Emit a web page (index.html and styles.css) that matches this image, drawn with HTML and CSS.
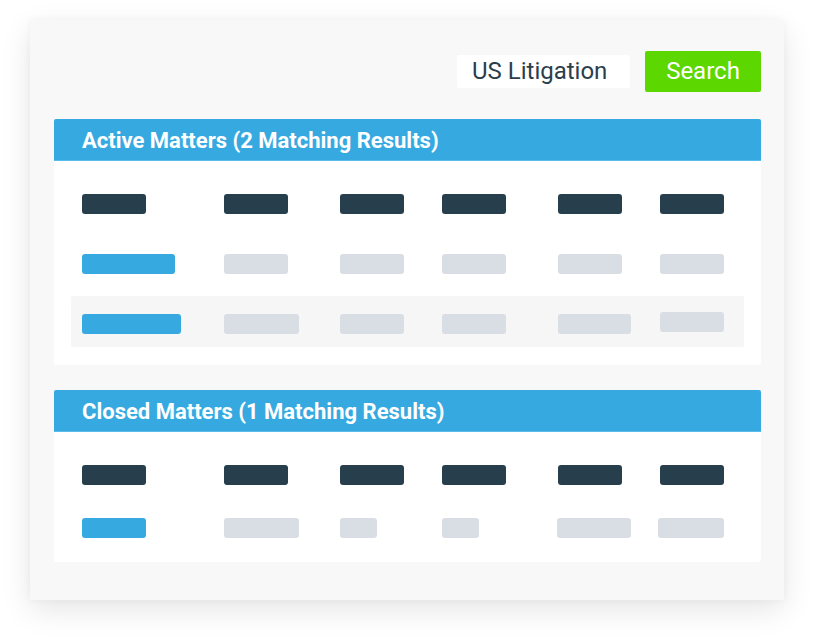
FILE: index.html
```html
<!DOCTYPE html>
<html>
<head>
<meta charset="utf-8">
<link rel="stylesheet" href="styles.css">
</head>
<body>
<div class="card">
  <div class="search">
    <div class="input">US Litigation</div>
    <div class="btn">Search</div>
  </div>

  <div class="panel">
    <div class="panel-head">Active Matters (2 Matching Results)</div>
    <div class="panel-body">
      <div class="row">
        <span class="bar dark w64"></span><span class="bar dark w64"></span><span class="bar dark w64"></span><span class="bar dark w64"></span><span class="bar dark w64"></span><span class="bar dark w64"></span>
      </div>
      <div class="row">
        <span class="bar blue w93"></span><span class="bar gray w64"></span><span class="bar gray w64"></span><span class="bar gray w64"></span><span class="bar gray w64"></span><span class="bar gray w64"></span>
      </div>
      <div class="row shaded">
        <span class="bar blue w99"></span><span class="bar gray w75"></span><span class="bar gray w64"></span><span class="bar gray w64"></span><span class="bar gray w73"></span><span class="bar gray w64 up"></span>
      </div>
    </div>
  </div>

  <div class="panel">
    <div class="panel-head">Closed Matters (1 Matching Results)</div>
    <div class="panel-body tight">
      <div class="row">
        <span class="bar dark w64"></span><span class="bar dark w64"></span><span class="bar dark w64"></span><span class="bar dark w64"></span><span class="bar dark w64"></span><span class="bar dark w64"></span>
      </div>
      <div class="row">
        <span class="bar blue w64"></span><span class="bar gray w75"></span><span class="bar gray w37"></span><span class="bar gray w37"></span><span class="bar gray w74 left1"></span><span class="bar gray w66 left2"></span>
      </div>
    </div>
  </div>
</div>
</body>
</html>
```

FILE: styles.css
```css
* { box-sizing: border-box; }
html, body { margin: 0; padding: 0; background: #ffffff; }
body {
  font-family: Roboto, "Liberation Sans", sans-serif;
  width: 815px;
  height: 641px;
  overflow: hidden;
}
.card {
  margin: 20px 0 0 30px;
  width: 754px;
  height: 580px;
  background: #f8f8f8;
  box-shadow: 0 10px 28px rgba(0, 0, 0, 0.10), 0 0 8px rgba(0,0,0,0.04);
  padding: 31px 23px 0 24px;
}
.search {
  display: flex;
  justify-content: flex-end;
  align-items: center;
  gap: 15px;
  height: 41px;
  margin-bottom: 27px;
}
.input {
  width: 173px;
  height: 33px;
  background: #fff;
  border-radius: 2px;
  color: #2b3e4c;
  font-size: 24px;
  line-height: 33px;
  padding-left: 15px;
}
.btn {
  width: 116px;
  height: 41px;
  background: #5cd700;
  border-radius: 2px;
  color: #fff;
  font-size: 24px;
  line-height: 41px;
  text-align: center;
}
.panel { margin-bottom: 25px; }
.panel-head {
  height: 42px;
  background: #37a9e1;
  border-radius: 2px 2px 0 0;
  color: #fff;
  font-weight: 700;
  font-size: 22px;
  line-height: 44px;
  padding-left: 28px;
  border-bottom: 1px solid #5bbbeb;
}
.panel-body {
  background: #fff;
  padding: 17px 17px 18px;
  display: flex;
  flex-direction: column;
  gap: 8px;
  border-radius: 0 0 2px 2px;
}
.panel-body.tight { gap: 1px; padding-bottom: 8px; }
.row {
  display: grid;
  grid-template-columns: 142px 116px 102px 116px 102px 1fr;
  align-items: start;
  padding: 16px 11px;
  height: 52px;
}
.row.shaded {
  background: #f6f6f6;
  border-radius: 2px;
  margin-top: -2px;
  padding: 18px 11px 13px;
  height: 51px;
}
.bar {
  display: block;
  height: 20px;
  border-radius: 3px;
}
.dark { background: #273f4d; }
.blue { background: #36a9e1; }
.gray { background: #d9dde4; }
.up { margin-top: -2px; }
.left1 { margin-left: -1px; }
.left2 { margin-left: -2px; }
.w37 { width: 37px; }
.w64 { width: 64px; }
.w66 { width: 66px; }
.w73 { width: 73px; }
.w74 { width: 74px; }
.w75 { width: 75px; }
.w93 { width: 93px; }
.w99 { width: 99px; }
```
